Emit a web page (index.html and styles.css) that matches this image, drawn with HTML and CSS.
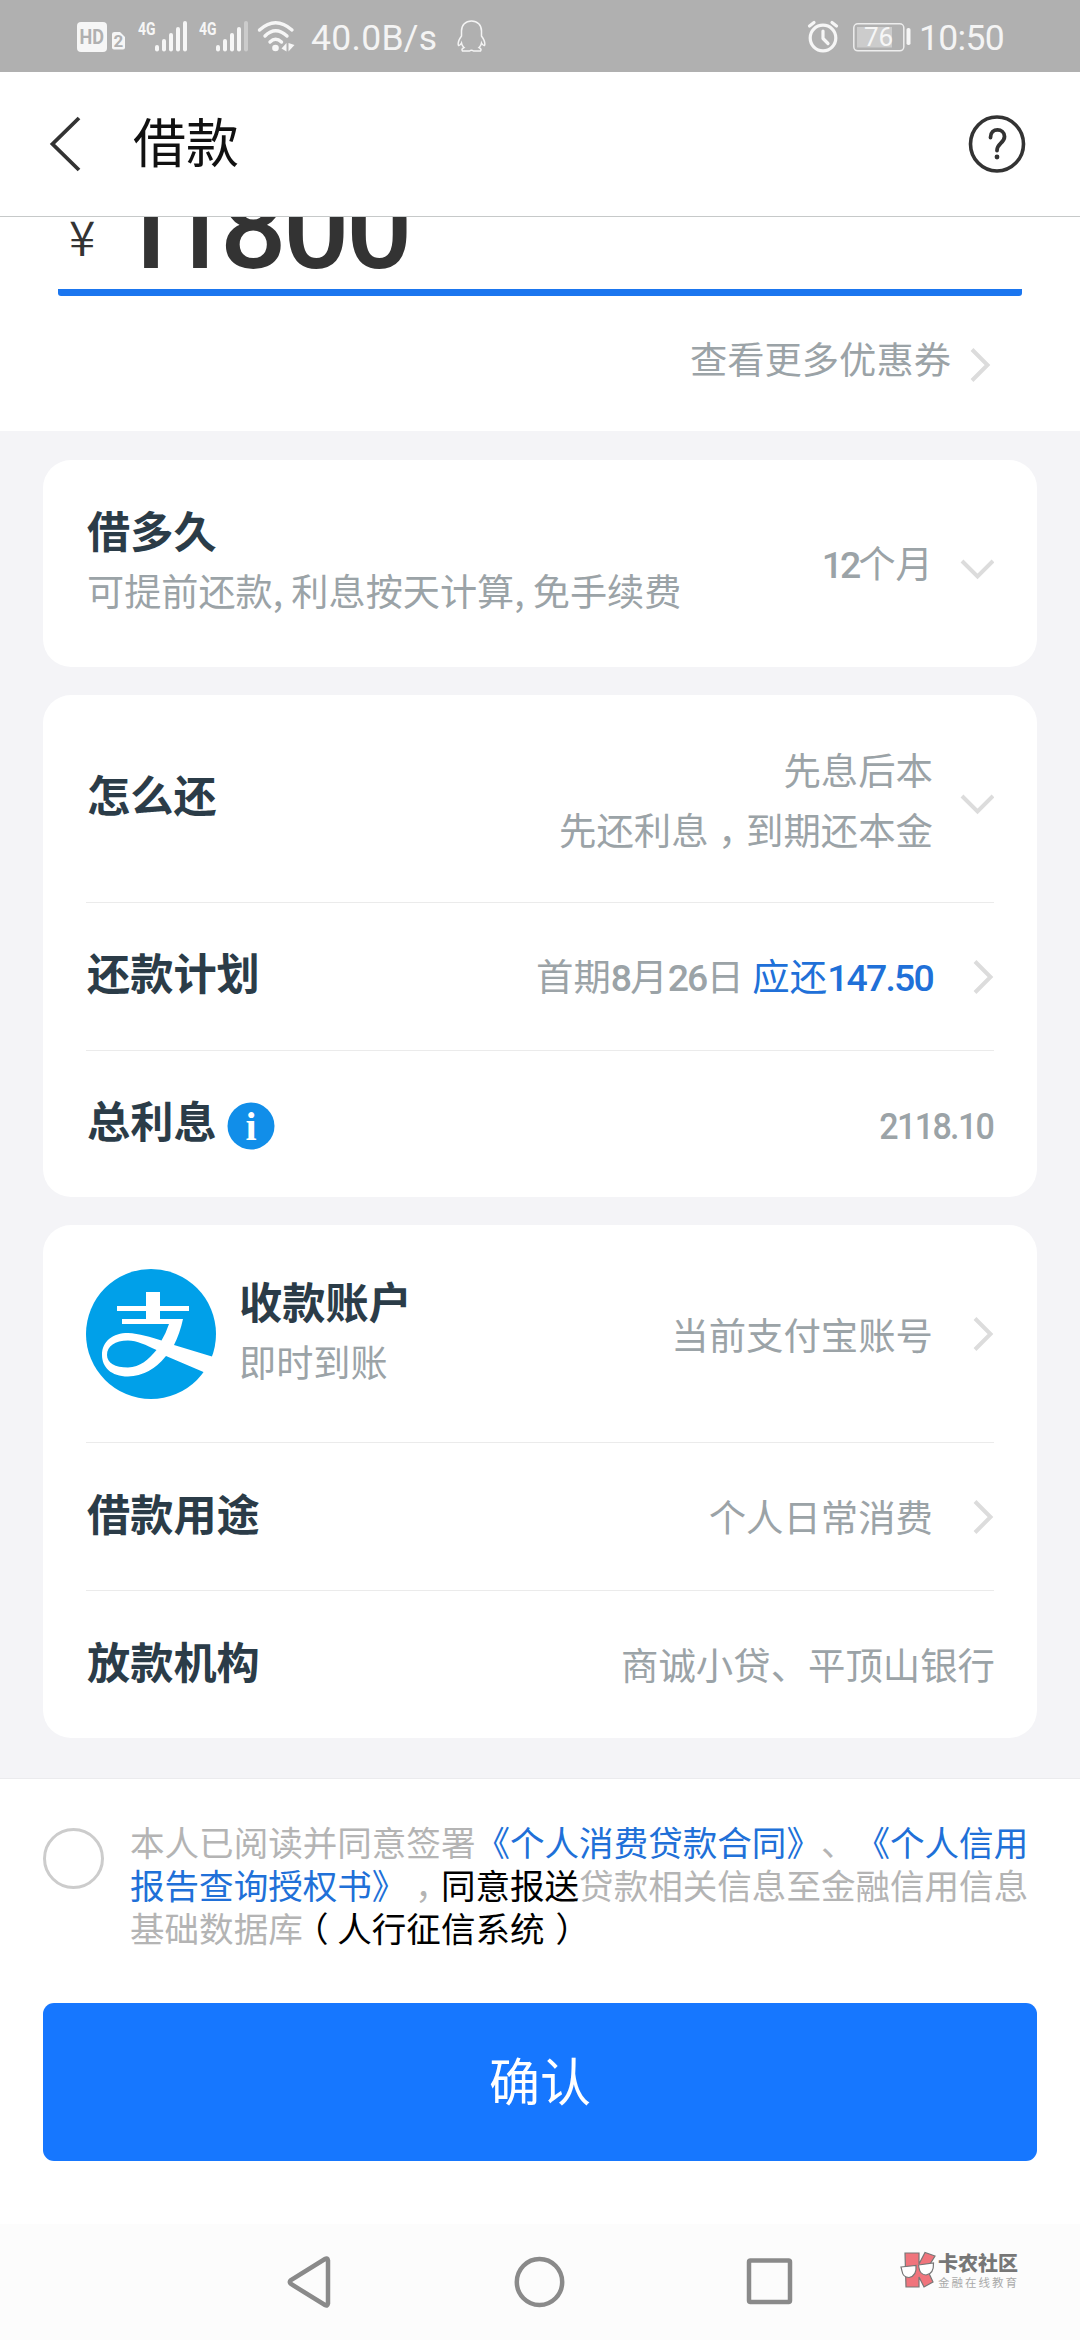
FILE: index.html
```html
<!DOCTYPE html>
<html lang="zh-CN">
<head>
<meta charset="utf-8">
<title>借款</title>
<link rel="stylesheet" href="styles.css">
</head>
<body>
<div class="screen">
  <div class="status">
    <svg class="status-icons" width="222" height="72" viewBox="77 0 222 72">
      <g fill="#f6f6f6">
        <rect x="77" y="22" width="30" height="30" rx="4"/>
        <path d="M114.500 32H120L125 37V47.500Q125 49.500 123 49.500H114Q112 49.500 112 47.500V34Q112 32 114.500 32Z"/>
        <text class="tag" x="138" y="35" font-size="19" textLength="17.500" lengthAdjust="spacingAndGlyphs">4G</text>
        <text class="tag" x="199" y="35" font-size="19" textLength="17.500" lengthAdjust="spacingAndGlyphs">4G</text>
        <rect x="155" y="45" width="4" height="6.500" rx="2"/><rect x="162" y="39" width="4" height="12.500" rx="2"/><rect x="169" y="33" width="4" height="18.500" rx="2"/><rect x="176" y="27" width="4" height="24.500" rx="2"/><rect x="183" y="21" width="4" height="30.500" rx="2"/>
        <rect x="216" y="45" width="4" height="6.500" rx="2"/><rect x="223" y="39" width="4" height="12.500" rx="2"/><rect x="230" y="33" width="4" height="18.500" rx="2"/><rect x="237" y="27" width="4" height="24.500" rx="2"/><rect x="244" y="21" width="4" height="30.500" rx="2" opacity=".4"/>
        <circle cx="275.500" cy="48" r="3.300"/>
        <path d="M286.500 43V51.500L281.500 48.500ZM288.500 51.500V43L294.500 45Z"/>
      </g>
      <text class="tag" x="79.500" y="44" font-size="20" fill="#b0b0b0" textLength="24.500" lengthAdjust="spacingAndGlyphs">HD</text>
      <text class="tag" x="113.500" y="47" font-size="17" fill="#b0b0b0">2</text>
      <g fill="none" stroke="#f6f6f6" stroke-width="3.400" stroke-linecap="round">
        <path d="M259.500 30Q275.500 15.500 292 30"/><path d="M265 36Q275.500 25.500 287 36"/><path d="M270 42Q275.500 36.500 281.500 42"/>
      </g>
    </svg>
    <span class="speed">40.0B/s</span>
    <svg class="qq" width="30" height="72" viewBox="457 0 30 72" fill="none" stroke="#f4f4f4" stroke-width="1.500">
      <path d="M461.500 36V31C461.500 25 465.500 21 471.500 21S481.500 25 481.500 31V36C484 39.500 485.500 43 484.500 45.500Q483 46 481.500 43Q481 46 479 47.500Q482 49 480.500 51H473.500Q471.500 49.500 469.500 51H462.500Q461 49 464 47.500Q462 46 461.500 43Q460 46 458.500 45.500C457.500 43 459 39.500 461.500 36Z"/>
    </svg>
    <svg class="status-right" width="104" height="72" viewBox="806 0 104 72">
      <g fill="none" stroke="#f6f6f6" stroke-width="3.200" stroke-linecap="round" stroke-linejoin="round">
        <circle cx="822" cy="38" r="12.800"/><path d="M822 31V38.500L827 43.500M808.500 26L813 22.500M831 22.500L835.500 26"/>
      </g>
      <rect x="852.800" y="23.800" width="50" height="27" rx="4" fill="none" stroke="#ededed" stroke-width="1.500"/>
      <rect x="856" y="27" width="35" height="20.500" fill="#cccccc"/>
      <rect x="905.500" y="28" width="4" height="17" rx="1.800" fill="#f6f6f6"/>
      <text class="batt" x="863" y="45.500" font-size="26">76</text>
    </svg>
    <span class="clock">10:50</span>
  </div>

  <header class="nav">
    <svg width="32" height="56" viewBox="0 0 32 56" fill="none" stroke="#333" stroke-width="3.800"><path d="M30 2L3.500 28L30 54"/></svg>
    <h1 class="title">借款</h1>
    <svg class="help" width="58" height="60" viewBox="0 0 58 60" fill="none" stroke="#333" stroke-linecap="round">
      <ellipse cx="29" cy="30" rx="26.500" ry="27" stroke-width="3.600"/>
      <path d="M22.500 23.500C22.500 13 36.500 14 36.500 22.500C36.500 29 29 29.500 29 36.500" stroke-width="3.800"/>
      <circle cx="29" cy="43" r="2.400" fill="#333" stroke="none"/>
    </svg>
  </header>

  <section class="amount">
    <div class="amount-line"><span class="yen">¥</span><span class="num"><span class="n1">1</span><span class="n2">1</span><span class="n3">800</span></span></div>
    <div class="coupon"><span>查看更多优惠券</span>
      <svg width="21" height="34" viewBox="0 0 21 34" class="chev"><path d="M2 1.500L17.500 17L2 32.500"/></svg></div>
  </section>

  <main class="cards">
    <section class="card">
      <div class="row r-term">
        <div class="stack"><span class="label">借多久</span><span class="sub">可提前还款, 利息按天计算, 免手续费</span></div>
        <span class="value"><span class="digits d-term">12</span>个月</span>
        <svg width="62" height="34" viewBox="0 0 62 34" class="chev"><path d="M30 14L45.500 29.500L61 14"/></svg>
      </div>
    </section>

    <section class="card">
      <div class="row r-how">
        <span class="label">怎么还</span>
        <div class="value two"><span>先息后本</span><span>先还利息<span class="comma">，</span>到期还本金</span></div>
        <svg width="62" height="34" viewBox="0 0 62 34" class="chev"><path d="M30 14L45.500 29.500L61 14"/></svg>
      </div>
      <div class="row line r-plan">
        <span class="label">还款计划</span>
        <span class="value">首期<span class="digits">8</span>月<span class="digits">26</span>日 <span class="blue">应还<span class="digits">147.50</span></span></span>
        <svg width="62" height="34" viewBox="0 0 62 34" class="chev"><path d="M43 1.500L58.500 17L43 32.500"/></svg>
      </div>
      <div class="row line r-last">
        <span class="label">总利息</span>
        <svg class="info" width="48" height="48" viewBox="0 0 48 48"><circle cx="24" cy="24" r="23.500" fill="#118ee9"/><text x="24" y="37.500" text-anchor="middle" class="info-i">i</text></svg>
        <span class="value total"><span class="digits d-total">2118.10</span></span>
      </div>
    </section>

    <section class="card">
      <div class="row r-acct">
        <svg class="logo" width="130" height="130" viewBox="0 0 130 130">
          <circle cx="65" cy="65" r="65" fill="#00a0e9"/>
          <path fill="#fff" d="M60 23H74V37H103V42H74V50H97Q94 64 88 76L131 89L121 104.500L80 87Q64 107 42 107.500C25 107.500 16 98 16 86C16 72 27 64 42 64C53 64.500 65 68 75.500 71.500Q80 64 83 55H36V50H60V42H31V37H60ZM42 71.500C29 71.500 21 77 21 86C21 94 29 98.500 42 98.500C54 98.500 63 90 70.500 81C60 76 51 71.500 42 71.500Z"/>
        </svg>
        <div class="stack"><span class="label">收款账户</span><span class="sub">即时到账</span></div>
        <span class="value">当前支付宝账号</span>
        <svg width="62" height="34" viewBox="0 0 62 34" class="chev"><path d="M43 1.500L58.500 17L43 32.500"/></svg>
      </div>
      <div class="row line r-use">
        <span class="label">借款用途</span><span class="value">个人日常消费</span>
        <svg width="62" height="34" viewBox="0 0 62 34" class="chev"><path d="M43 1.500L58.500 17L43 32.500"/></svg>
      </div>
      <div class="row line r-use">
        <span class="label">放款机构</span><span class="value">商诚小贷、平顶山银行</span>
      </div>
    </section>
  </main>

  <footer class="foot">
    <div class="agree">
      <span class="radio"></span>
      <p class="terms">本人已阅读并同意签署<span class="link">《个人消费贷款合同》</span>、<span class="link">《个人信用<br>报告查询授权书》</span><span class="comma">，</span><span class="dark">同意报送</span>贷款相关信息至金融信用信息<br>基础数据库<span class="dark"><span class="open">（</span>人行征信系统<span class="close">）</span></span></p>
    </div>
    <button class="confirm">确认</button>
  </footer>

  <div class="sysnav">
    <svg width="44" height="52" viewBox="0 0 44 52"><path d="M41 4.500V47.500Q40.500 50.500 38 49L4 28Q1.500 26 4 24L38 3Q40.500 1.500 41 4.500Z"/></svg>
    <svg width="52" height="52" viewBox="0 0 52 52"><ellipse cx="26.500" cy="26" rx="22.700" ry="23"/></svg>
    <svg width="48" height="52" viewBox="0 0 48 52"><rect x="3" y="4.500" width="41" height="41.500" rx="1.500"/></svg>
    <div class="mark">
      <svg width="36" height="38" viewBox="0 0 36 38" stroke="#777" stroke-width="1.200">
        <path fill="#f0747c" d="M5 2H19V13L25 1.500L35 5L27 18L33 31L24 36L19 26V36H6Z"/>
        <path fill="#fff" d="M1 16L16 14.500Q17 25 9 26.500Q3 26.500 2 20ZM18.500 14L33.500 12Q34 23 26 24Q20 23.500 19 17Z"/>
      </svg>
      <div class="mark-text"><b>卡农社区</b><i>金融在线教育</i></div>
    </div>
  </div>
</div>
</body>
</html>
```
FILE: styles.css
```css
* { box-sizing: border-box; }
body { margin: 0; }
svg { display: block; flex: none; }

.screen {
  position: relative;
  display: flex;
  flex-direction: column;
  width: 1080px;
  height: 2340px;
  overflow: hidden;
  background: #fff;
  font-family: "Noto Sans CJK SC", sans-serif;
  text-spacing-trim: space-all;
  white-space: nowrap;
}

/* status bar */
.status {
  display: flex;
  align-items: center;
  height: 72px;
  padding-left: 77px;
  background: #b0b0b0;
  color: #f4f4f4;
  font-family: Roboto, sans-serif;
  font-size: 35.5px;
  line-height: 72px;
}
.speed { width: 146px; padding: 3px 0 0 12px; letter-spacing: .3px; }
.qq { margin-left: 12px; }
.status-right { margin-left: 320px; }
.clock { padding: 3px 0 0 8px; letter-spacing: -.7px; }
.tag { font-family: Roboto, sans-serif; font-weight: 700; }
.batt { font-family: Roboto, sans-serif; fill: #f6f6f6; }

/* title bar */
.nav {
  display: flex;
  align-items: center;
  height: 145px;
  padding: 0 54px 0 49px;
  border-bottom: 1px solid #c6c9c9;
}
.title { margin: -8px 0 0 52px; font-size: 53px; font-weight: 400; line-height: 80px; color: #111; }
.help { margin-left: auto; }

/* amount */
.amount { height: 214px; padding: 0 58px; overflow: hidden; }
.amount-line {
  display: flex;
  align-items: flex-end;
  height: 79px;
  border-bottom: 7px solid #1b76ef;
  border-radius: 3px;
  color: #333;
}
.yen { width: 56px; padding: 0 0 27px 11px; font-size: 48px; line-height: 54px; font-weight: 350; }
.num { padding-bottom: 4px; font-family: Roboto, sans-serif; font-weight: 500; font-size: 117px; line-height: 114px; }
.n1 { letter-spacing: -17.500px; }
.n2 { letter-spacing: -9.500px; }
.n3 { letter-spacing: -3.500px; }
.coupon {
  display: flex;
  align-items: center;
  justify-content: flex-end;
  height: 133px;
  padding-right: 31px;
  color: #9ba3a7;
  font-size: 37.300px;
}
.coupon span { margin: -9px 19px 0 0; }
.coupon .chev { margin-top: 4px; }
.chev { fill: none; stroke: #dcdcdc; stroke-width: 4; }

/* cards */
.cards {
  display: flex;
  flex-direction: column;
  gap: 28px;
  height: 1347px;
  padding: 29px 43px 0;
  background: #f4f4f7;
}
.card { padding: 0 43px; border-radius: 28px; background: #fff; }
.row { display: flex; align-items: center; height: 148px; }
.line { border-top: 1px solid #ebebeb; }
.r-term { height: 207px; }
.r-how { height: 207px; }
.r-last { height: 147px; }
.r-acct { height: 217px; }
.label { margin-top: -8px; padding-left: 1px; font-size: 43.200px; line-height: 60px; font-weight: 700; color: #2b3c48; }
.stack { display: flex; flex-direction: column; }
.stack .label { margin: 0; }
.sub { padding-left: 1px; font-size: 37.150px; line-height: 62px; color: #9ba3a7; }
.r-term .stack { margin-top: -8px; }
.r-acct .stack { margin: -6px 0 0 22px; }
.value { margin: 0 -1px 0 auto; font-size: 37.400px; line-height: 60px; color: #9ba3a7; }
.total { margin-right: 1px; }
.r-how .label { margin-top: -11px; }
.r-plan .label { margin-top: -12px; }
.r-last .label { margin-top: -10px; }
.r-use .label { margin-top: -10px; }
.r-use .value { margin-top: -2px; }
.two { display: flex; flex-direction: column; align-items: flex-end; }
.blue { color: #2070d8; }
.digits { font-family: Roboto, sans-serif; font-weight: 500; letter-spacing: -1.800px; }
.d-term { letter-spacing: -3px; }
.d-total { display: inline-block; transform: scaleX(.91); transform-origin: right; }
.info { margin-left: 10px; margin-top: 4px; }
.info-i { font-family: "Liberation Serif", serif; font-weight: 700; font-size: 40px; fill: #fff; }
.comma { display: inline-block; width: 1em; text-indent: .25em; }

/* agreement and button */
.foot { height: 446px; padding: 49px 43px 0; border-top: 1px solid #ebebee; }
.agree { display: flex; height: 175px; }
.radio { width: 61px; height: 61px; border: 3px solid #ccc; border-radius: 50%; }
.terms { margin: -8px 0 0 26px; font-size: 34.560px; line-height: 43.200px; color: #b4b4b4; }
.link { color: #2070d8; }
.dark { color: #000; }
.open { display: inline-block; width: 1em; text-indent: -.25em; }
.close { display: inline-block; width: 1em; text-indent: .32em; }
.confirm {
  display: block;
  width: 994px;
  height: 158px;
  padding: 0 0 7px;
  border: 0;
  border-radius: 11px;
  background: #1677ff;
  color: #fff;
  font: 400 51px/80px "Noto Sans CJK SC", sans-serif;
}

/* system navigation */
.sysnav {
  position: relative;
  display: flex;
  align-items: center;
  justify-content: space-between;
  height: 116px;
  padding: 0 286px 0 287px;
  background: #fcfcfc;
}
.sysnav > svg { fill: none; stroke: #8a8a8a; stroke-width: 4.500; }
.mark { position: absolute; left: 900px; top: 27px; display: flex; gap: 2px; }
.mark-text { display: flex; flex-direction: column; }
.mark b { font-size: 20px; line-height: 24px; font-weight: 900; color: #777; }
.mark i { font-size: 11.500px; line-height: 14px; font-style: normal; letter-spacing: 2px; color: #aaa; }
```
